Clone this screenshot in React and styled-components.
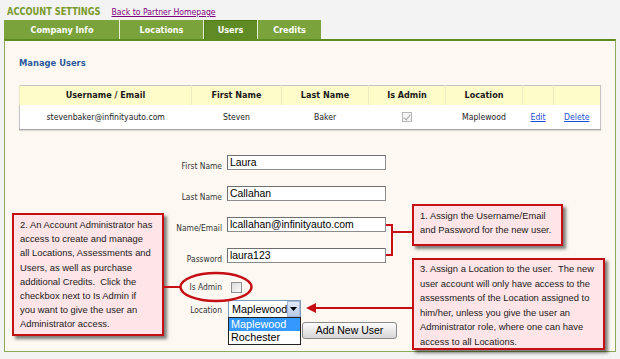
import React from 'react';
import styled, { createGlobalStyle } from 'styled-components';

const tahoma = `"DejaVu Sans Condensed", "DejaVu Sans", Verdana, sans-serif`;
const arial = `"Liberation Sans", Arial, sans-serif`;

const Global = createGlobalStyle`
  html, body { margin: 0; padding: 0; background: #f3f3f3; }
  body { font-family: ${tahoma}; }
  * { box-sizing: border-box; }
`;

const Page = styled.div`
  position: relative;
  width: 620px;
  height: 359px;
  overflow: hidden;
  background: #f3f3f3;
  font-family: ${tahoma};
  font-stretch: condensed;
`;

const TitleBar = styled.div`
  display: flex;
  align-items: baseline;
  gap: 11px;
  height: 20px;
  padding: 6px 0 0 7px;
`;

const Title = styled.span`
  font-size: 9.2px;
  font-weight: bold;
  color: #7a9a2c;
  transform: scaleY(1.12);
`;

const BackLink = styled.a`
  font-size: 8.6px;
  color: #800080;
  text-decoration: underline;
`;

const Tabs = styled.div`
  display: flex;
  height: 19px;
  margin-left: 4px;
`;

const Tab = styled.div`
  width: ${p => p.$w}px;
  display: flex;
  align-items: center;
  justify-content: center;
  background: ${p => (p.$active ? '#5f8b25' : '#7ba33c')};
  border-left: 1px solid ${p => (p.$first ? '#7ba33c' : '#e9f0dc')};
  box-shadow: ${p => (p.$active ? 'inset 1px 1px 0 #4e7a18' : 'none')};
  color: #fff;
  font-size: 9px;
  font-weight: bold;
`;

const Panel = styled.div`
  margin: 0 4px;
  height: 313px;
  background: #fdf9f2;
  border-top: 2px solid #5c8c1e;
  border-left: 1px solid #8aab58;
  border-right: 1px solid #8aab58;
  border-bottom: 1px solid #8aab58;
  box-shadow: inset 0 1px 0 #ffffff;
  padding: 16px 15px 0 14px;
`;

const SectionTitle = styled.div`
  font-size: 9.3px;
  font-weight: bold;
  color: #2e5a9c;
  height: 14px;
`;

const Table = styled.table`
  margin-top: 14px;
  width: 581px;
  border-collapse: collapse;
  border: 1px solid #c4c4c4;
  border-bottom-color: #a8a8a8;
  box-shadow: 0 1px 1px rgba(0, 0, 0, 0.12);
  table-layout: fixed;
`;

const Th = styled.th`
  width: ${p => p.$w}px;
  height: 19px;
  padding: 0;
  background: #fefcc8;
  border-left: 1px solid #ecebc4;
  font-size: 9px;
  font-weight: bold;
  color: #1a1a1a;
  text-align: center;
`;

const Td = styled.td`
  height: 25px;
  padding: 0;
  background: #fff;
  font-size: 8.6px;
  color: #222;
  text-align: center;
`;

const TableLink = styled.a`
  color: #1d4fd6;
  text-decoration: underline;
`;

const DisabledCheck = styled.span`
  display: inline-block;
  width: 10px;
  height: 10px;
  border: 1px solid #b8b8b8;
  background: #f4f4f4;
  position: relative;
  vertical-align: middle;
  &::after {
    content: '';
    position: absolute;
    left: 2px;
    top: 0px;
    width: 3px;
    height: 6px;
    border: solid #a8a8a8;
    border-width: 0 1px 1px 0;
    transform: rotate(40deg);
  }
`;

const Form = styled.div`
  display: grid;
  grid-template-columns: 203px max-content;
  column-gap: 5px;
  margin-top: 25px;
`;

const Label = styled.div`
  grid-column: 1;
  margin-top: ${p => p.$mt}px;
  align-self: end;
  text-align: right;
  font-size: 8.4px;
  line-height: 12px;
  color: #333;
  transform: translateY(${p => p.$dy || 0}px);
`;

const Field = styled.div`
  grid-column: 2;
  margin-top: ${p => p.$mt}px;
  position: relative;
  display: flex;
  align-items: center;
`;

const TextBox = styled.div`
  width: 159px;
  height: 15px;
  border: 1px solid #8c8c8c;
  border-top-color: #6f6f6f;
  border-left-color: #6f6f6f;
  background: #fff;
  font-family: ${arial};
  font-size: 10.4px;
  line-height: 13px;
  padding: 0 2px;
  color: #000;
`;

const CheckBox = styled.span`
  display: inline-block;
  width: 11px;
  height: 11px;
  margin-left: 4px;
  border: 1px solid #8e8f8f;
  background: linear-gradient(135deg, #dcdcdc, #fbfbfb);
`;

const Select = styled.div`
  width: 73px;
  height: 18px;
  margin-left: 1px;
  display: flex;
  border: 1px solid #7f9db9;
  background: #fff;
  font-family: ${arial};
  font-size: 10.8px;
  line-height: 16px;
`;

const SelectValue = styled.span`
  flex: 1;
  padding-left: 3px;
  color: #000;
`;

const SelectButton = styled.span`
  width: 14px;
  display: flex;
  align-items: center;
  justify-content: center;
  background: linear-gradient(#dfe9f6, #b9cbe6);
  border: 1px solid #a7b9d6;
`;

const DropList = styled.div`
  position: absolute;
  left: 1px;
  top: 17px;
  width: 73px;
  border: 1px solid #222;
  background: #fff;
  font-family: ${arial};
  font-size: 10.8px;
  line-height: 13px;
  z-index: 2;
`;

const DropItem = styled.div`
  height: 13px;
  padding-left: 2px;
  background: ${p => (p.$sel ? '#3399ff' : '#fff')};
  color: ${p => (p.$sel ? '#fff' : '#000')};
`;

const Button = styled.div`
  margin-left: 75px;
  width: 95px;
  height: 17px;
  border: 1px solid #8a8a8a;
  border-radius: 3px;
  background: linear-gradient(#fdfdfd, #e9e9e9 50%, #d6d6d6);
  font-family: ${arial};
  font-size: 10.5px;
  line-height: 15px;
  text-align: center;
  color: #000;
`;

const Callout = styled.div`
  position: absolute;
  left: ${p => p.$x}px;
  top: ${p => p.$y}px;
  width: ${p => p.$w}px;
  height: ${p => p.$h}px;
  background: #ffe5e7;
  border: 2px solid #c50f14;
  box-shadow: 3px 3px 3px rgba(0, 0, 0, 0.5);
  padding: ${p => p.$pt}px 1px 0 6px;
  font-family: ${arial};
  font-size: 9.4px;
  line-height: ${p => p.$lh}px;
  color: #1a1a1a;
  z-index: 3;
`;

const CalloutLine = styled.div`
  white-space: pre;
`;

const Overlay = styled.svg`
  position: absolute;
  left: 0;
  top: 0;
  pointer-events: none;
  z-index: 4;
`;

const cols = [
  { t: 'Username / Email', w: 172 },
  { t: 'First Name', w: 90 },
  { t: 'Last Name', w: 87 },
  { t: 'Is Admin', w: 77 },
  { t: 'Location', w: 77 },
  { t: '', w: 31 },
  { t: '', w: 47 },
];

const note1 = ['1. Assign the Username/Email', 'and Password for the new user.'];
const note2 = [
  '2. An Account Administrator has',
  'access to create and manage',
  'all Locations, Assessments and',
  'Users, as well as purchase',
  'additional Credits.  Click the',
  'checkbox next to Is Admin if',
  'you want to give the user an',
  'Administrator access.',
];
const note3 = [
  '3. Assign a Location to the user.  The new',
  'user account will only have access to the',
  'assessments of the Location assigned to',
  'him/her, unless you give the user an',
  'Administrator role, where one can have',
  'access to all Locations.',
];

export default function App() {
  return (
    <Page>
      <Global />
      <TitleBar>
        <Title>ACCOUNT SETTINGS</Title>
        <BackLink href="#">Back to Partner Homepage</BackLink>
      </TitleBar>
      <Tabs>
        <Tab $w={115} $first>Company Info</Tab>
        <Tab $w={84}>Locations</Tab>
        <Tab $w={54} $active>Users</Tab>
        <Tab $w={64}>Credits</Tab>
      </Tabs>
      <Panel>
        <SectionTitle>Manage Users</SectionTitle>
        <Table>
          <thead>
            <tr>
              {cols.map((c, i) => (
                <Th key={i} $w={c.w}>{c.t}</Th>
              ))}
            </tr>
          </thead>
          <tbody>
            <tr>
              <Td>stevenbaker@infinityauto.com</Td>
              <Td>Steven</Td>
              <Td>Baker</Td>
              <Td><DisabledCheck /></Td>
              <Td>Maplewood</Td>
              <Td><TableLink href="#">Edit</TableLink></Td>
              <Td><TableLink href="#">Delete</TableLink></Td>
            </tr>
          </tbody>
        </Table>
        <Form>
          <Label $mt={0} $dy={2}>First Name</Label>
          <Field $mt={0}><TextBox>Laura</TextBox></Field>
          <Label $mt={16} $dy={2}>Last Name</Label>
          <Field $mt={16}><TextBox>Callahan</TextBox></Field>
          <Label $mt={16} $dy={2}>Name/Email</Label>
          <Field $mt={16}><TextBox>lcallahan@infinityauto.com</TextBox></Field>
          <Label $mt={16} $dy={2}>Password</Label>
          <Field $mt={16}><TextBox>laura123</TextBox></Field>
          <Label $mt={18} $dy={0}>Is Admin</Label>
          <Field $mt={18}><CheckBox /></Field>
          <Label $mt={7} $dy={-2}>Location</Label>
          <Field $mt={7}>
            <Select>
              <SelectValue>Maplewood</SelectValue>
              <SelectButton>
                <svg width="7" height="4" viewBox="0 0 7 4">
                  <path d="M0 0 H7 L3.5 4 Z" fill="#000" />
                </svg>
              </SelectButton>
            </Select>
            <DropList>
              <DropItem $sel>Maplewood</DropItem>
              <DropItem>Rochester</DropItem>
            </DropList>
          </Field>
          <Field $mt={4}><Button>Add New User</Button></Field>
        </Form>
      </Panel>

      <Callout $x={412} $y={204} $w={151} $h={42} $pt={3} $lh={14}>
        {note1.map((l, i) => <CalloutLine key={i}>{l}</CalloutLine>)}
      </Callout>
      <Callout $x={12} $y={213} $w={152} $h={123} $pt={3} $lh={14.2}>
        {note2.map((l, i) => <CalloutLine key={i}>{l}</CalloutLine>)}
      </Callout>
      <Callout $x={412} $y={258} $w={193} $h={92} $pt={2} $lh={14.6}>
        {note3.map((l, i) => <CalloutLine key={i}>{l}</CalloutLine>)}
      </Callout>

      <Overlay width="620" height="359" viewBox="0 0 620 359">
        <g stroke="#c50f14" strokeWidth="2" fill="none">
          <path d="M386 225 H392 V255 H386" />
          <path d="M392 232 H412" />
          <path d="M164 287 H181" />
          <ellipse cx="216" cy="287" rx="35.5" ry="14" strokeWidth="2.5" />
          <path d="M314 308 H412" />
        </g>
        <path d="M306 308 L316 303 L316 313 Z" fill="#c50f14" />
      </Overlay>
    </Page>
  );
}
